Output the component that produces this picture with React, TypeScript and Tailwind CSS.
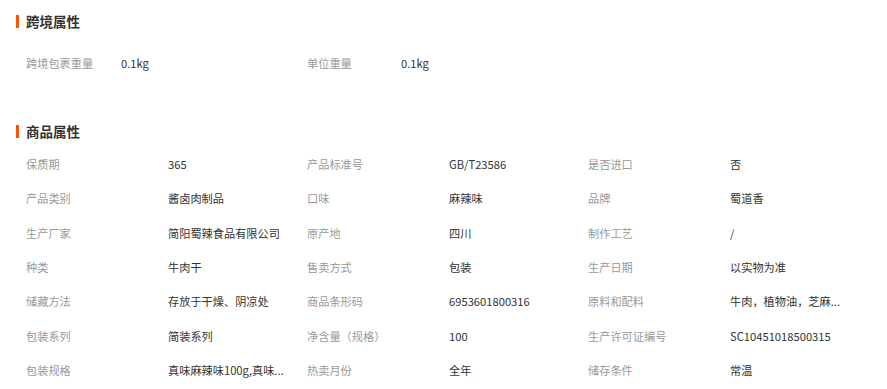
import React from 'react';

const crossBorder: [string, string][] = [
  ['跨境包裹重量', '0.1kg'],
  ['单位重量', '0.1kg'],
];

const goods: [string, string][] = [
  ['保质期', '365'],
  ['产品标准号', 'GB/T23586'],
  ['是否进口', '否'],
  ['产品类别', '酱卤肉制品'],
  ['口味', '麻辣味'],
  ['品牌', '蜀道香'],
  ['生产厂家', '简阳蜀辣食品有限公司'],
  ['原产地', '四川'],
  ['制作工艺', '/'],
  ['种类', '牛肉干'],
  ['售卖方式', '包装'],
  ['生产日期', '以实物为准'],
  ['储藏方法', '存放于干燥、阴凉处'],
  ['商品条形码', '6953601800316'],
  ['原料和配料', '牛肉，植物油，芝麻...'],
  ['包装系列', '简装系列'],
  ['净含量（规格）', '100'],
  ['生产许可证编号', 'SC10451018500315'],
  ['包装规格', '真味麻辣味100g,真味...'],
  ['热卖月份', '全年'],
  ['储存条件', '常温'],
];

const SectionTitle = ({ title }: { title: string }) => (
  <div className="flex items-center h-5 gap-[7px]">
    <span className="w-[3px] h-[13px] bg-[#ff5000]" />
    <h3 className="text-[13.5px] font-bold text-[#333]">{title}</h3>
  </div>
);

const Attr = ({ label, value }: { label: string; value: string }) => (
  <div className="flex items-center w-[281px]">
    <span className="w-[142px] shrink-0 text-[#999] whitespace-nowrap">{label}</span>
    <span className="text-[#333] whitespace-nowrap">{value}</span>
  </div>
);

export default function App() {
  return (
    <div
      className="bg-white w-[887px] h-[389px] overflow-hidden pl-4 pt-[11px] text-[11.2px] leading-5"
      style={{ fontFamily: '"Noto Sans CJK SC", "Noto Sans", sans-serif' }}
    >
      <SectionTitle title="跨境属性" />
      <div className="flex h-[34px] mt-[15px] pl-[10px]">
        <div className="flex items-center w-[281px]">
          <span className="w-[95px] text-[#999]">{crossBorder[0][0]}</span>
          <span className="text-[#333]">{crossBorder[0][1]}</span>
        </div>
        <div className="flex items-center w-[281px]">
          <span className="w-[94px] text-[#999]">{crossBorder[1][0]}</span>
          <span className="text-[#333]">{crossBorder[1][1]}</span>
        </div>
      </div>

      <div className="mt-[41px]">
        <SectionTitle title="商品属性" />
      </div>
      <div className="grid grid-cols-[281px_281px_281px] auto-rows-[34.33px] mt-[6px] pl-[10px]">
        {goods.map(([label, value]) => (
          <Attr key={label} label={label} value={value} />
        ))}
      </div>
    </div>
  );
}
